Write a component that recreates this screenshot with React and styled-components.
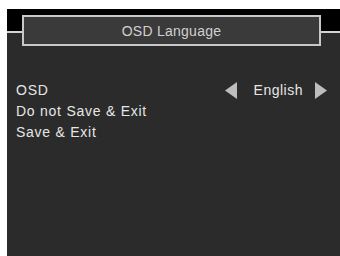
import React from 'react'
import styled, { createGlobalStyle } from 'styled-components'

const Global = createGlobalStyle`
body{
  margin:0;
  background:#fff;
}
`

const Screen = styled.div`
margin:9px 0 0 7px;
height:247px;
background:#2b2b2b;
font-family:"Liberation Sans", Arial, sans-serif;
color:#e6e6e6;
overflow:hidden;
`

const Header = styled.div`
display:flex;
align-items:flex-start;
background:linear-gradient(#000 0 22px, transparent 22px);
`

const Stub = styled.div`
flex:0 0 ${p => p.w}px;
height:22px;
border-bottom:2px solid #d4d4d4;
`

const TitleBox = styled.div`
flex:1;
margin-top:6px;
height:27px;
border:2px solid #c8c8c8;
background:#3a3a3a;
display:flex;
align-items:center;
justify-content:center;
font-size:14px;
letter-spacing:0.25px;
color:#d0d0d0;
`

const Menu = styled.div`
display:flex;
flex-direction:column;
gap:5px;
padding:36px 13px 0 9px;
`

const Row = styled.div`
display:flex;
align-items:center;
justify-content:space-between;
height:16px;
font-size:14px;
letter-spacing:0.75px;
`

const Value = styled.div`
display:flex;
align-items:center;
letter-spacing:0.5px;
`

const Arrow = styled.svg`
width:12px;
height:17px;
display:block;
margin:${p => p.m};
`

const OsdLanguage = () => {
  return (
    <Screen>
      <Header>
        <Stub w={15}/>
        <TitleBox>OSD Language</TitleBox>
        <Stub w={19}/>
      </Header>
      <Menu>
        <Row>
          <span>OSD</span>
          <Value>
            <Arrow m="0 17px 0 0" viewBox="0 0 12 17"><polygon points="12,0 12,17 0,8.5" fill="#bdbdbd"/></Arrow>
            <span>English</span>
            <Arrow m="0 0 0 12px" viewBox="0 0 12 17"><polygon points="0,0 0,17 12,8.5" fill="#bdbdbd"/></Arrow>
          </Value>
        </Row>
        <Row>Do not Save &amp; Exit</Row>
        <Row>Save &amp; Exit</Row>
      </Menu>
    </Screen>
  )
}

export default function App() {
  return (
    <>
      <Global/>
      <OsdLanguage/>
    </>
  )
}
